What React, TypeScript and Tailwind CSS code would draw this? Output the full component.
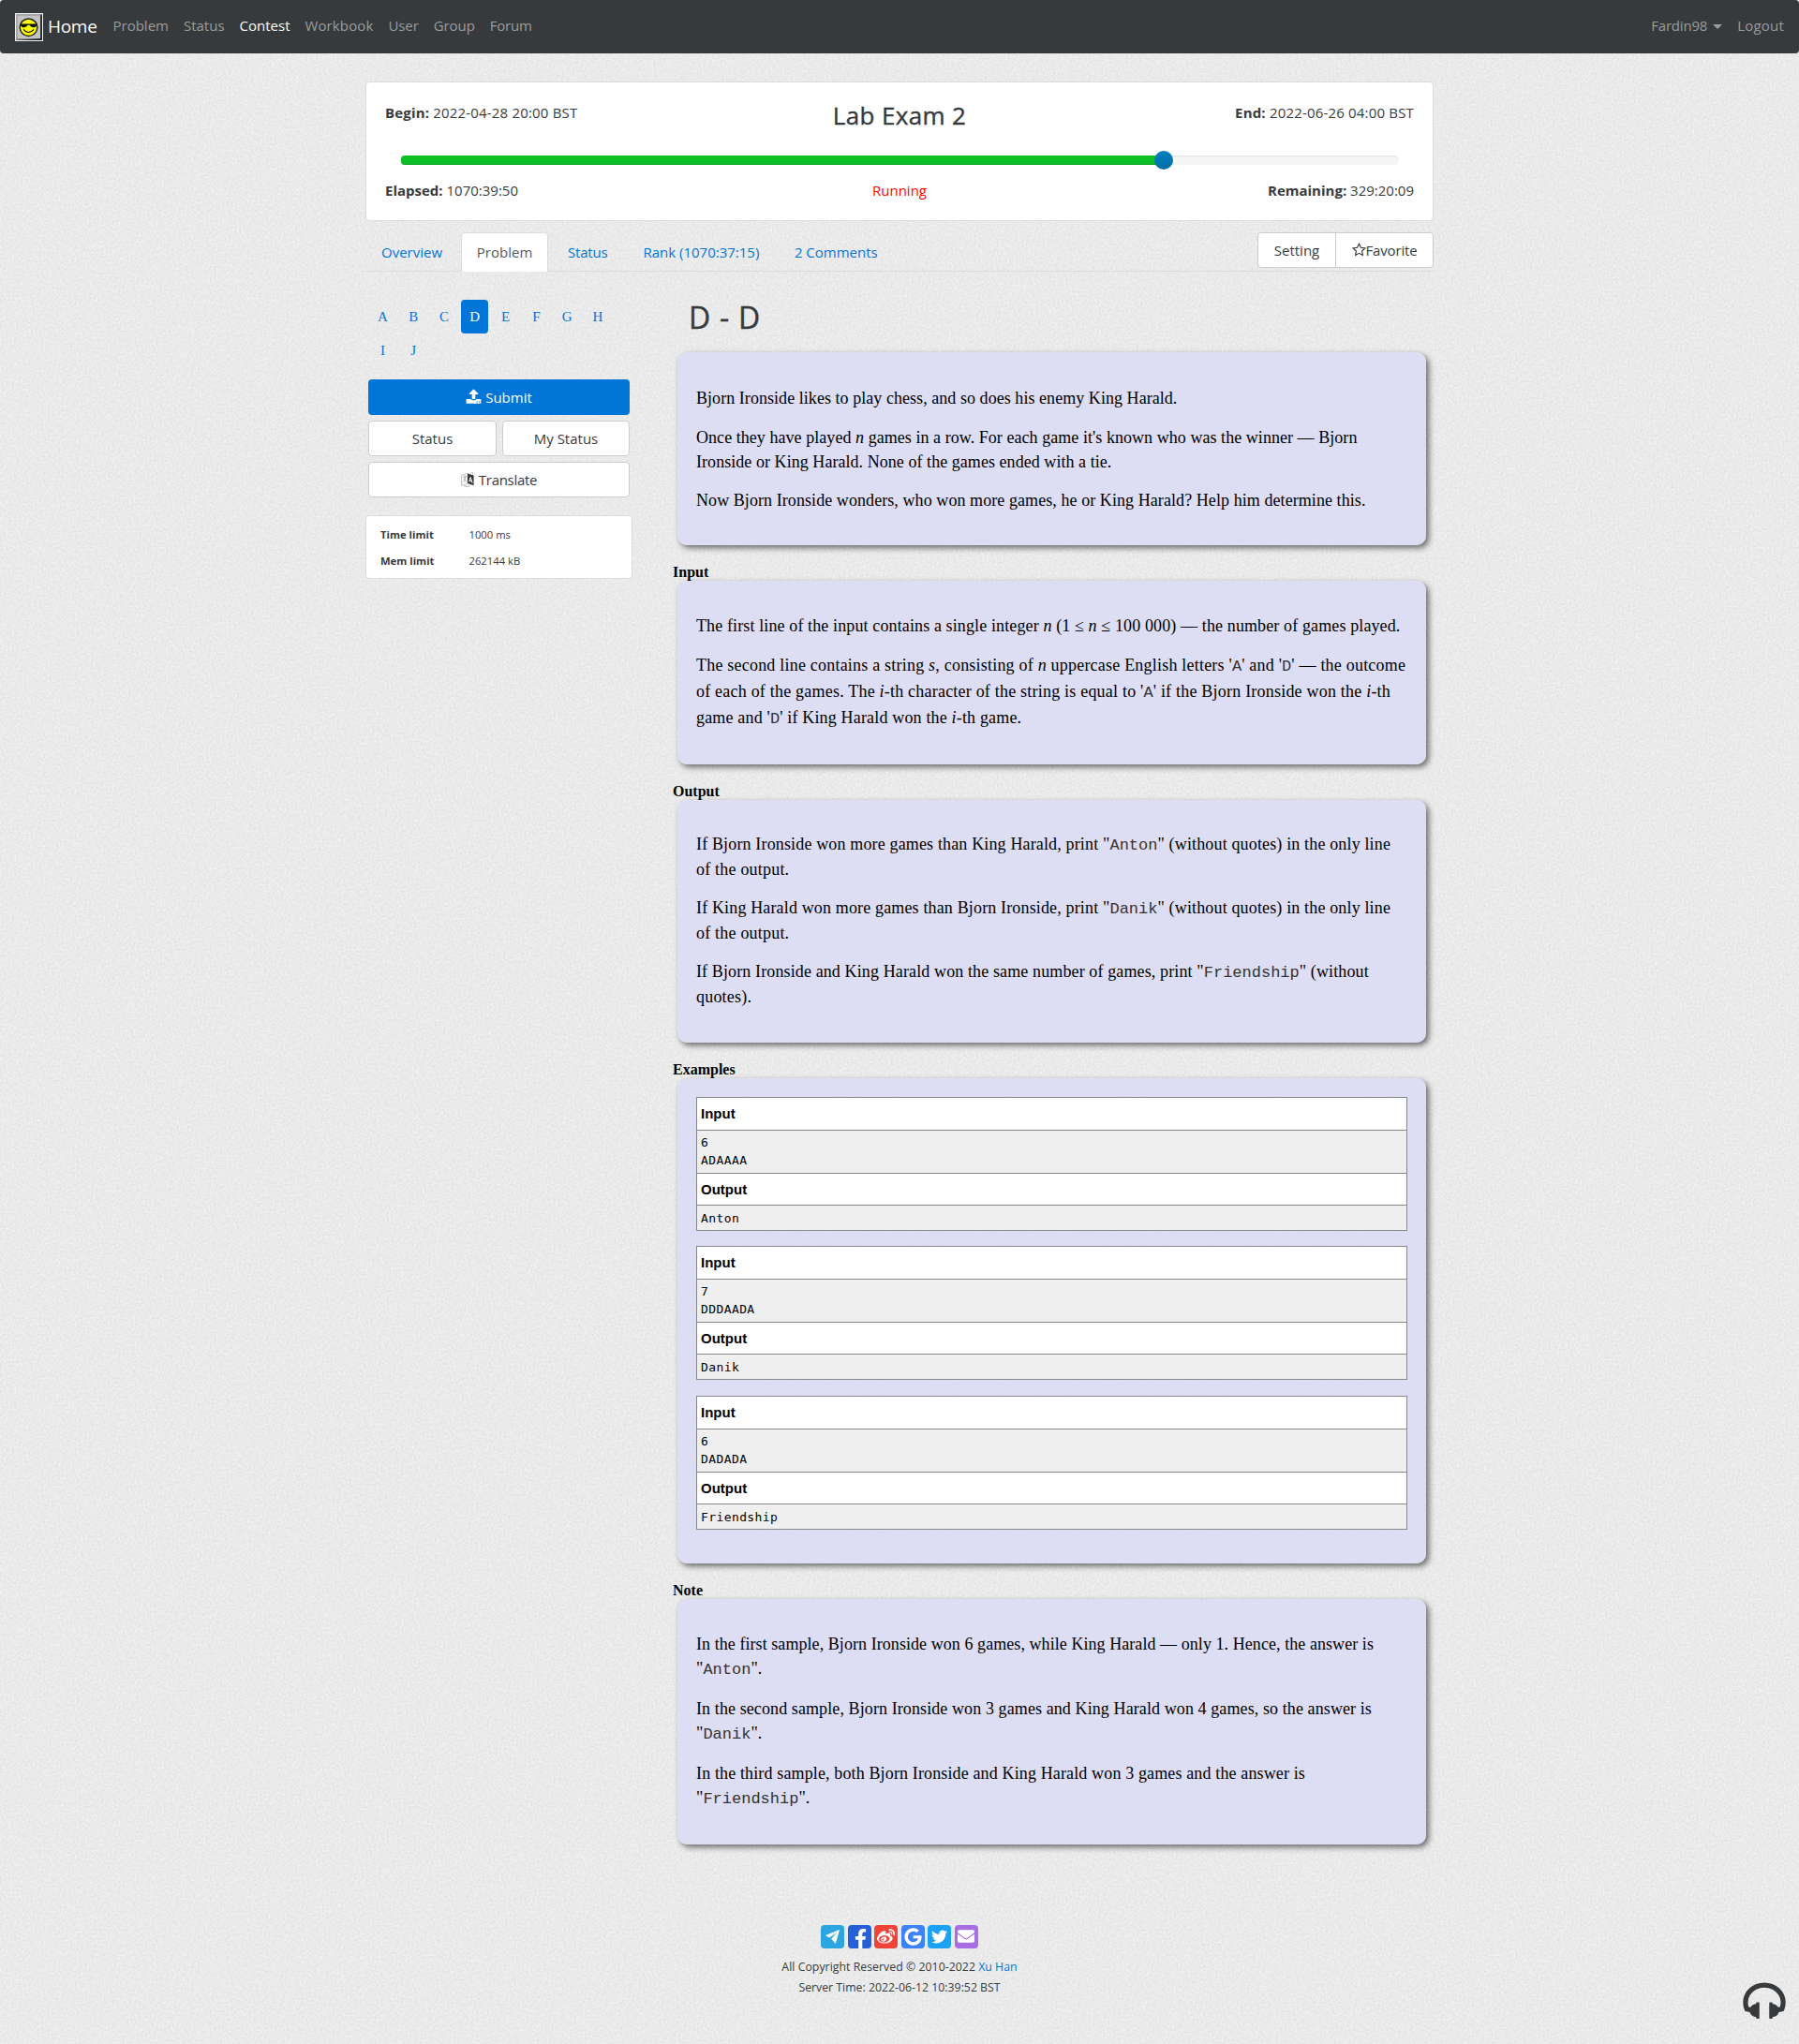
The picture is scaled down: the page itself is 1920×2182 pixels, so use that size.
import React from "react";
import { FaFacebookF, FaWeibo, FaGoogle, FaTwitter, FaEnvelope } from "react-icons/fa";

type Node = React.ReactNode;

function Grain() {
  return (
    <svg className="pointer-events-none absolute inset-0 h-full w-full" aria-hidden="true">
      <filter id="grain" x="0" y="0" width="100%" height="100%" colorInterpolationFilters="sRGB">
        <feTurbulence type="fractalNoise" baseFrequency="0.45" numOctaves="2" seed="4" stitchTiles="stitch" />
        <feColorMatrix type="matrix" values="0.1 0 0 0 0.868  0.1 0 0 0 0.868  0.1 0 0 0 0.868  0 0 0 0 1" />
      </filter>
      <rect width="100%" height="100%" filter="url(#grain)" />
    </svg>
  );
}

function Logo() {
  return (
    <svg viewBox="0 0 30 30" className="mt-[3px] h-[30px] w-[30px]">
      <rect width="30" height="30" fill="#f4f4f4" />
      <rect x="1" y="1" width="28" height="28" fill="#2c2c2c" />
      <path d="M1 1h28l-2 2v24L1 29z" fill="#8c8c8c" />
      <path d="M1 1h26v2H3v24H1z" fill="#a8a8a8" />
      <rect x="3" y="3" width="24" height="24" fill="#c4c4c4" />
      <circle cx="14.5" cy="15.2" r="9.3" fill="#ffff00" stroke="#222" strokeWidth="1.5" />
      <path d="M5.5 11.4h18v1.2l-1.4 1.9q-3 2-5.6-.6l-1-1.1h-2l-1 1.1q-2.6 2.6-5.6.6l-1.4-1.9z" fill="#111" />
      <path d="M9 17.3q5.5 6.8 11 0" fill="none" stroke="#111" strokeWidth="1.3" />
    </svg>
  );
}

function UploadIcon() {
  return (
    <svg viewBox="0 0 1792 1792" className="h-[17px] w-[17px]" fill="currentColor">
      <path d="M1344 1472q0-26-19-45t-45-19-45 19-19 45 19 45 45 19 45-19 19-45zm256 0q0-26-19-45t-45-19-45 19-19 45 19 45 45 19 45-19 19-45zm128-224v320q0 40-28 68t-68 28h-1472q-40 0-68-28t-28-68v-320q0-40 28-68t68-28h427q21 56 70.5 92t110.5 36h256q61 0 110.5-36t70.5-92h427q40 0 68 28t28 68zm-325-648q-17 40-59 40h-256v448q0 26-19 45t-45 19h-256q-26 0-45-19t-19-45v-448h-256q-42 0-59-40-17-39 14-69l448-448q18-19 45-19t45 19l448 448q31 30 14 69z" />
    </svg>
  );
}

function LanguageIcon() {
  return (
    <svg viewBox="0 0 14 16" className="h-[16px] w-[14px]">
      <path d="M.5 3.5 7 1.2v11L.5 14.3z" fill="#fff" stroke="#aaa" strokeWidth=".7" />
      <path d="M2 5.6 5.8 4.4M3.9 3.6v1.3M5 5q-.8 4-3 5.600M2.800 6.500q1.200 2.500 3 3.200" fill="none" stroke="#8a8a8a" strokeWidth=".7" />
      <path d="M7 1.500 13.600 3.600v10.600L7 12z" fill="#373a3c" />
      <path d="M8.700 10.300 10.200 5.500l1.900 6M9.200 8.900l2.200.7" fill="none" stroke="#fff" strokeWidth="1" />
      <path d="M3 14.600q3 1.400 6.500.2" fill="none" stroke="#999" strokeWidth=".8" />
      <path d="M9 1.500 12.500.5v2.600" fill="none" stroke="#aaa" strokeWidth=".6" />
    </svg>
  );
}

function StarIcon() {
  return (
    <svg viewBox="0 0 15 15" className="h-[15px] w-[15px]">
      <path d="M7.500 1.200 9.400 5.300 13.900 5.900 10.600 9 11.400 13.500 7.500 11.300 3.600 13.500 4.400 9 1.100 5.900 5.600 5.300z" fill="none" stroke="#373a3c" strokeWidth="1.150" />
    </svg>
  );
}

function HeadphonesIcon() {
  return (
    <svg viewBox="0 0 1664 1536" className="h-[42px] w-[46px]" fill="#373a3c">
      <path d="M1664 846q0 166-60 314l-20 49-185 33q-22 83-90.500 136.500t-156.500 53.500v32q0 14-9 23t-23 9h-64q-14 0-23-9t-9-23v-576q0-14 9-23t23-9h64q14 0 23 9t9 23v32q71 0 130 35.500t93 95.500l68-12q29-95 29-193 0-148-88-279t-236.500-209-315.500-78-315.500 78-236.500 209-88 279q0 98 29 193l68 12q34-60 93-95.500t130-35.500v-32q0-14 9-23t23-9h64q14 0 23 9t9 23v576q0 14-9 23t-23 9h-64q-14 0-23-9t-9-23v-32q-88 0-156.500-53.500t-90.500-136.500l-185-33-20-49q-60-148-60-314 0-151 67-291t179-242.500 266-163.500 320-61 320 61 266 163.500 179 242.500 67 291z" />
    </svg>
  );
}

function Code({ children }: { children: Node }) {
  return <code className="font-['Liberation_Mono',monospace] text-[17px] leading-none font-normal text-[#333] tracking-normal">{children}</code>;
}

function Line({ t = "tracking-[0.05px]", children }: { t?: string; children: Node }) {
  return <span className={"block whitespace-nowrap " + t}>{children}</span>;
}

function Panel({ className, children }: { className: string; children: Node }) {
  return (
    <section
      className={
        "ml-[5px] w-[799px] rounded-[10px] bg-[#dadaf5]/80 px-5 font-['Liberation_Serif',serif] text-[18px] text-black shadow-[3px_3px_6px_rgba(0,0,0,0.55)] " +
        className
      }
    >
      {children}
    </section>
  );
}

function Label({ className, children }: { className: string; children: Node }) {
  return <h2 className={"font-['Liberation_Serif',serif] text-[16px] leading-[19px] font-bold text-black " + className}>{children}</h2>;
}

function Example({ input, output }: { input: string; output: string }) {
  const head = "flex items-center border-b border-[#888] bg-white pl-1 font-['Liberation_Sans',sans-serif] text-[15px] leading-none font-bold";
  const body = "bg-[#efefef] pl-1 font-['DejaVu_Sans_Mono',monospace] text-[13px] leading-[19px] tracking-[0.4px]";
  return (
    <div className="w-[759px] border border-[#888] text-black">
      <div className={head + " h-[35px] pb-[1px]"}>Input</div>
      <pre className={body + " h-[46px] border-b border-[#888] pt-[3px]"}>{input}</pre>
      <div className={head + " h-[34px]"}>Output</div>
      <pre className={body + " h-[26px] pt-[4px]"}>{output}</pre>
    </div>
  );
}

const navItems: [string, string][] = [
  ["Problem", ""],
  ["Status", ""],
  ["Contest", "text-white"],
  ["Workbook", "tracking-[0.12px]"],
  ["User", "tracking-[-0.1px]"],
  ["Group", "tracking-[-0.08px]"],
  ["Forum", "tracking-[-0.2px]"],
];

const letters = ["A", "B", "C", "D", "E", "F", "G", "H", "I", "J"];
const button = "flex items-center justify-center rounded-[4px] border border-[#ccc] bg-white h-[38px]";

export default function App() {
  return (
    <div className="relative h-[2182px] w-[1920px] overflow-hidden bg-[#ebebeb] font-['Open_Sans',sans-serif] text-[15px] leading-6 text-[#373a3c]">
      <Grain />
      <div className="relative">
        <nav className="flex h-[57px] items-center rounded-[4px] bg-[#373a3c] pr-4 pb-[2px] pl-4 text-[#9b9c9d]">
          <div className="flex items-center gap-[5px] text-[19px] tracking-[-0.3px] text-white">
            <Logo />
            Home
          </div>
          <div className="mb-[2px] ml-[17px] flex gap-4">
            {navItems.map(([name, cls]) => (
              <span key={name} className={cls}>{name}</span>
            ))}
          </div>
          <div className="mb-[2px] ml-auto flex items-center">
            <span className="tracking-[-0.19px]">Fardin98</span>
            <span className="mt-[3px] ml-[6px] border-x-[5px] border-t-[5px] border-x-transparent border-t-[#9b9c9d]" />
            <span className="ml-4 tracking-[0.2px]">Logout</span>
          </div>
        </nav>

        <main className="mx-auto w-[1140px] pt-[30px]">
          <header className="flex h-[149px] flex-col rounded-[4px] border border-[#dcdcdc] bg-white px-5">
            <div className="flex h-[78px] justify-between pt-[20px]">
              <div className="w-[400px] tracking-[0.18px]"><b>Begin:</b> 2022-04-28 20:00 BST</div>
              <h1 className="mt-[3px] text-[26px] font-medium tracking-[0.35px] [-webkit-text-stroke:0.4px_#373a3c]">Lab Exam 2</h1>
              <div className="w-[400px] text-right tracking-[0.18px]"><b>End:</b> 2022-06-26 04:00 BST</div>
            </div>
            <div className="mx-[17px] flex h-[10px] items-center rounded-[4px] bg-[#f6f6f6] shadow-[inset_0_1px_2px_rgba(0,0,0,0.1)]">
              <div className="h-[10px] w-[806px] rounded-l-[4px] bg-[#0bbf25] shadow-[inset_0_-1px_0_rgba(0,0,0,0.15)]" />
              <div className="-ml-[2px] h-5 w-5 rounded-full bg-linear-to-b from-[#0480be] to-[#036fa5]" />
            </div>
            <div className="mt-[15px] flex justify-between">
              <div className="w-[400px]"><b>Elapsed:</b> 1070:39:50</div>
              <div className="text-[#f00]">Running</div>
              <div className="w-[400px] text-right"><b>Remaining:</b> 329:20:09</div>
            </div>
          </header>

          <div className="mt-[12px] flex h-[42px] items-start border-b border-[#dcdcdc] text-[#0275d8]">
            <span className="mt-[9px] ml-[17px]">Overview</span>
            <div className="ml-5 flex h-[42px] w-[93px] shrink-0 justify-center rounded-t-[4px] border border-b-0 border-[#dcdcdc] bg-white pt-[8px] text-[#55595c]">Problem</div>
            <span className="mt-[9px] ml-[21px] tracking-[-0.2px]">Status</span>
            <span className="mt-[9px] ml-[38px]">Rank (1070:37:15)</span>
            <span className="mt-[9px] ml-[37.500px]">2 Comments</span>
            <div className="ml-auto flex h-[38px] w-[188px] rounded-[4px] border border-[#ccc] bg-white text-[#373a3c]">
              <div className="flex w-[83px] items-center justify-center border-r border-[#ccc] pb-[1px]">Setting</div>
              <div className="flex flex-1 items-center justify-center pb-[1px] tracking-[-0.16px]"><StarIcon />Favorite</div>
            </div>
          </div>

          <div className="flex">
            <aside className="w-[285px] pt-[30px]">
              <div className="ml-[4px] flex w-[270px] flex-wrap gap-x-[4px] font-['Liberation_Serif',serif] text-[15px] text-[#0275d8]">
                {letters.map((l) => (
                  <span
                    key={l}
                    className={
                      "flex h-9 w-[28.8px] items-center justify-center rounded-[4px] " + (l === "D" ? "bg-[#0275d8] text-white" : "")
                    }
                  >
                    {l}
                  </span>
                ))}
              </div>
              <div className="mt-[13px] ml-[3px] flex w-[279px] flex-col gap-[6px]">
                <div className="flex h-[38px] items-center justify-center gap-1 rounded-[4px] bg-[#0275d8] pb-[1px] text-white">
                  <UploadIcon />
                  Submit
                </div>
                <div className="flex gap-[6px]">
                  <div className={button + " w-[137px]"}>Status</div>
                  <div className={button + " w-[136px]"}>My Status</div>
                </div>
                <div className={button + " gap-[5px] tracking-[-0.3px]"}>
                  <LanguageIcon />
                  Translate
                </div>
              </div>
              <div className="mt-[19px] grid h-[68px] grid-cols-[94.500px_1fr] content-start rounded-[4px] border border-[#dcdcdc] bg-white pt-[6px] pl-[15px] text-[11.250px] leading-7">
                <b>Time limit</b>
                <span>1000 ms</span>
                <b>Mem limit</b>
                <span>262144 kB</span>
              </div>
            </aside>

            <article className="ml-[43px] w-[811px] pt-[28px]">
              <h1 className="ml-[17px] h-[58px] pt-[2px] text-[32px] leading-[38px] font-medium tracking-[0.7px] [-webkit-text-stroke:0.4px_#373a3c]">D - D</h1>

              <Panel className="h-[205.500px] pt-[36px] leading-[26px]">
                <p><Line>Bjorn Ironside likes to play chess, and so does his enemy King Harald.</Line></p>
                <p className="mt-4">
                  <Line>Once they have played <i>n</i> games in a row. For each game it's known who was the winner — Bjorn</Line>
                  <Line>Ironside or King Harald. None of the games ended with a tie.</Line>
                </p>
                <p className="mt-[15px]"><Line t="tracking-[0.073px]">Now Bjorn Ironside wonders, who won more games, he or King Harald? Help him determine this.</Line></p>
              </Panel>

              <Label className="mt-[19px]">Input</Label>
              <Panel className="h-[196.500px] pt-[35px] leading-[28px]">
                <p className="leading-[26px]">
                  <Line t="tracking-[0.12px]">The first line of the input contains a single integer <i>n</i> (1 ≤ <i>n</i> ≤ 100 000) — the number of games played.</Line>
                </p>
                <p className="mt-[15px]">
                  <Line t="tracking-[0.21px]">The second line contains a string <i>s</i>, consisting of <i>n</i> uppercase English letters '<Code>A</Code>' and '<Code>D</Code>' — the outcome</Line>
                  <Line t="tracking-[0.21px]">of each of the games. The <i>i</i>-th character of the string is equal to '<Code>A</Code>' if the Bjorn Ironside won the <i>i</i>-th</Line>
                  <Line t="tracking-[0.17px]">game and '<Code>D</Code>' if King Harald won the <i>i</i>-th game.</Line>
                </p>
              </Panel>

              <Label className="mt-[19px]">Output</Label>
              <Panel className="h-[258.500px] pt-[34px] leading-[26.500px]">
                <p>
                  <Line t="tracking-[0.15px]">If Bjorn Ironside won more games than King Harald, print "<Code>Anton</Code>" (without quotes) in the only line</Line>
                  <Line t="tracking-[0.2px]">of the output.</Line>
                </p>
                <p className="mt-[15px]">
                  <Line t="tracking-[0.15px]">If King Harald won more games than Bjorn Ironside, print "<Code>Danik</Code>" (without quotes) in the only line</Line>
                  <Line t="tracking-[0.2px]">of the output.</Line>
                </p>
                <p className="mt-[15px]">
                  <Line t="tracking-[0.12px]">If Bjorn Ironside and King Harald won the same number of games, print "<Code>Friendship</Code>" (without</Line>
                  <Line t="tracking-[0.2px]">quotes).</Line>
                </p>
              </Panel>

              <Label className="mt-[19px]">Examples</Label>
              <Panel className="flex h-[518px] flex-col gap-[16.500px] pt-5">
                <Example input={"6\nADAAAA"} output="Anton" />
                <Example input={"7\nDDDAADA"} output="Danik" />
                <Example input={"6\nDADADA"} output="Friendship" />
              </Panel>

              <Label className="mt-[19px]">Note</Label>
              <Panel className="h-[262px] pt-[35px] leading-[26.500px]">
                <p>
                  <Line t="tracking-[0.063px]">In the first sample, Bjorn Ironside won 6 games, while King Harald — only 1. Hence, the answer is</Line>
                  <Line>"<Code>Anton</Code>".</Line>
                </p>
                <p className="mt-4">
                  <Line t="tracking-[0.097px]">In the second sample, Bjorn Ironside won 3 games and King Harald won 4 games, so the answer is</Line>
                  <Line>"<Code>Danik</Code>".</Line>
                </p>
                <p className="mt-4">
                  <Line t="tracking-[0.135px]">In the third sample, both Bjorn Ironside and King Harald won 3 games and the answer is</Line>
                  <Line>"<Code>Friendship</Code>".</Line>
                </p>
              </Panel>
            </article>
          </div>
        </main>

        <footer className="mt-[86px] flex flex-col items-center text-[12.300px] leading-[22px]">
          <div className="flex gap-[3.600px] text-white">
            <span className="flex h-[25px] w-[25px] items-center justify-center rounded-[4px] bg-[#2ca5e0]">
              <svg viewBox="0 0 18 18" className="h-[17px] w-[17px]" fill="#fff"><path d="M17 1 1 7.500 5.500 10 14 4 7.500 11.500 12.500 17z" /></svg>
            </span>
            <span className="flex h-[25px] w-[25px] items-end justify-center rounded-[4px] bg-[#2560d8] pl-[3px] text-[21px]"><FaFacebookF /></span>
            <span className="flex h-[25px] w-[25px] items-center justify-center rounded-[4px] bg-[#f0433a] text-[19px]"><FaWeibo /></span>
            <span className="flex h-[25px] w-[25px] items-center justify-center rounded-[4px] bg-[#3e82f7] text-[19px]"><FaGoogle /></span>
            <span className="flex h-[25px] w-[25px] items-center justify-center rounded-[4px] bg-[#1da1f2] text-[17px]"><FaTwitter /></span>
            <span className="flex h-[25px] w-[25px] items-center justify-center rounded-[4px] bg-[#a76fe3] text-[18px]"><FaEnvelope /></span>
          </div>
          <div className="mt-[9px] tracking-[0.030px]">All Copyright Reserved © 2010-2022 <span className="text-[#0275d8]">Xu Han</span></div>
          <div>Server Time: 2022-06-12 10:39:52 BST</div>
        </footer>
      </div>
      <div className="absolute right-[14px] bottom-[26px]"><HeadphonesIcon /></div>
    </div>
  );
}
